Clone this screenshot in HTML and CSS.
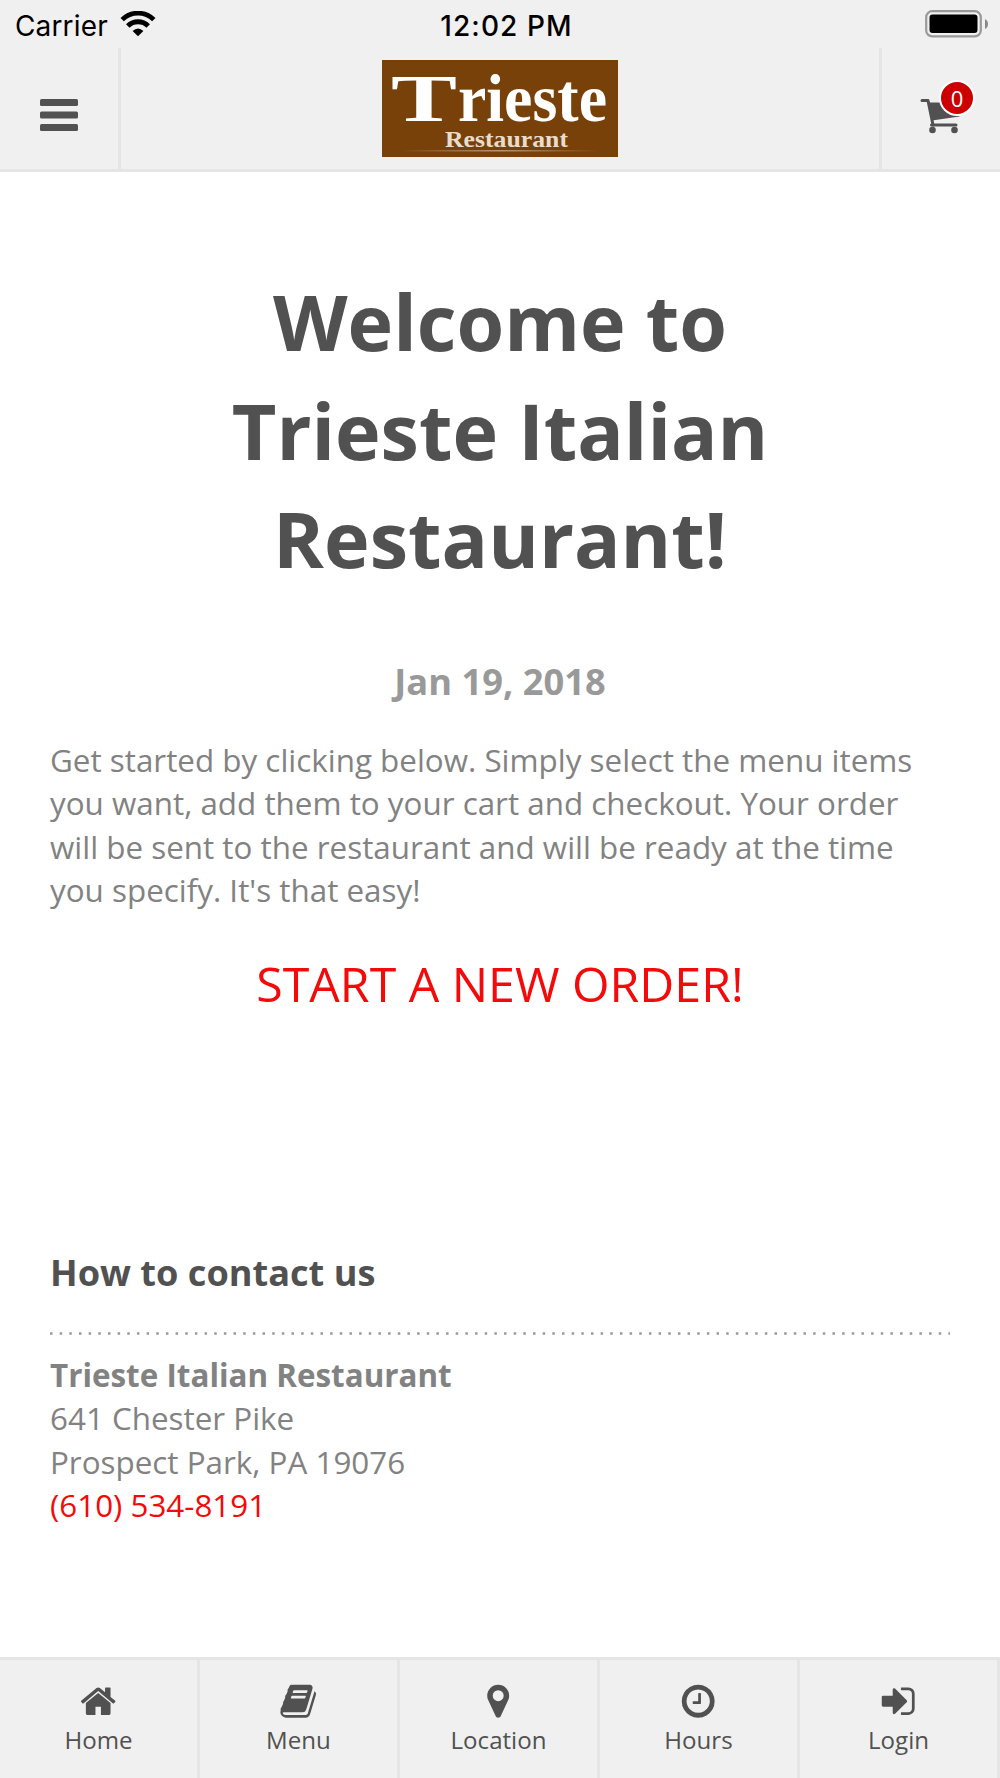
FILE: index.html
```html
<!DOCTYPE html>
<html lang="en">
<head>
<meta charset="utf-8">
<title>Trieste Italian Restaurant</title>
<link rel="stylesheet" href="styles.css">
</head>
<body>
<div class="app">
  <div class="status">
    <div class="carrier"><span class="carrier-name">Carrier</span>
      <svg class="wifi" width="36" height="26" viewBox="0 0 36 26">
        <g fill="none" stroke="#000">
          <path d="M2.2 8.600A22.6 22.6 0 0 1 33.8 8.600" stroke-width="4.8"/>
          <path d="M7.8 15A14.6 14.6 0 0 1 28.2 15" stroke-width="5"/>
        </g>
        <path d="M12.600 20Q18 15 23.400 20L18 25.200Z"/>
      </svg>
    </div>
    <div class="clock">12:02 PM</div>
    <svg class="battery" width="64" height="28" viewBox="0 0 64 28">
      <rect x="1.2" y="1.2" width="54.6" height="25.2" rx="6" fill="none" stroke="#999" stroke-width="2.2"/>
      <rect x="4.5" y="4.6" width="48" height="18.4" rx="3"/>
      <path d="M60 9q3 1.500 3 5t-3 5z" fill="#888"/>
    </svg>
  </div>

  <header class="header">
    <a class="header-btn menu-btn">
      <svg width="38" height="32" viewBox="0 0 38 32" fill="#515151">
        <rect y="0" width="38" height="7" rx="1.600"/>
        <rect y="12.500" width="38" height="7" rx="1.600"/>
        <rect y="25" width="38" height="7" rx="1.600"/>
      </svg>
    </a>
    <svg class="logo" width="236" height="97" viewBox="0 0 236 97">
      <defs>
        <linearGradient id="rule"><stop offset="0" stop-color="#fff" stop-opacity="0"/><stop offset=".5" stop-color="#fff" stop-opacity=".45"/><stop offset="1" stop-color="#fff" stop-opacity="0"/></linearGradient>
      </defs>
      <rect width="236" height="97" fill="#784109"/>
      <text class="logo-cap" x="9" y="61" textLength="66" lengthAdjust="spacingAndGlyphs">T</text>
      <text class="logo-name" x="76" y="61" textLength="149" lengthAdjust="spacingAndGlyphs">rieste</text>
      <text class="logo-sub" x="63" y="87" textLength="123" lengthAdjust="spacingAndGlyphs">Restaurant</text>
      <rect x="18" y="90" width="198" height="1.500" fill="url(#rule)"/>
    </svg>
    <a class="header-btn cart-btn">
      <span class="cart">
        <svg width="42" height="36" viewBox="0 0 42 36" fill="#515151">
          <path d="M2 2.500H8L13 27" fill="none" stroke="#515151" stroke-width="3" stroke-linecap="round" stroke-linejoin="round"/>
          <path d="M8 4.500H36L39.500 18.500L12 22.500Z"/>
          <rect x="10" y="25.500" width="27.500" height="3" rx="1.500"/>
          <circle cx="12.500" cy="32" r="3.300"/>
          <circle cx="34.500" cy="32" r="3.300"/>
        </svg>
        <span class="badge">0</span>
      </span>
    </a>
  </header>

  <main class="content">
    <h1>Welcome to<br>Trieste Italian<br>Restaurant!</h1>
    <p class="date">Jan 19, 2018</p>
    <p class="intro">Get started by clicking below. Simply select the menu items<br>you want, add them to your cart and checkout. Your order<br>will be sent to the restaurant and will be ready at the time<br>you specify. It's that easy!</p>
    <a class="start">START A NEW ORDER!</a>
    <h2>How to contact us</h2>
    <svg class="dots" width="900" height="3"><path d="M0 1.500H900" stroke="#999" stroke-width="2.500" stroke-dasharray="2.500 7.160"/></svg>
    <address><b>Trieste Italian Restaurant</b><br>641 Chester Pike<br>Prospect Park, PA 19076<br><a class="phone">(610) 534-8191</a></address>
  </main>

  <nav class="tabs">
    <a class="tab"><svg class="icon" viewBox="0 0 1792 1792"><path d="M1472 992v480q0 26-19 45t-45 19h-384v-384h-256v384h-384q-26 0-45-19t-19-45v-480q0-1 .5-3t.5-3l575-474 575 474q1 2 1 6zm223-69l-62 74q-8 9-21 11h-3q-13 0-21-7l-692-577-692 577q-12 8-24 7-13-2-21-11l-62-74q-8-10-7-23.500t11-21.500l719-599q32-26 76-26t76 26l244 204v-195q0-14 9-23t23-9h192q14 0 23 9t9 23v408l219 182q10 8 11 21.500t-7 23.500z"/></svg><span>Home</span></a>
    <a class="tab"><svg class="icon" viewBox="0 0 1792 1792"><path d="M1703 478q40 57 18 129l-275 906q-19 64-76.500 107.500t-122.500 43.500h-923q-77 0-148.500-53.500t-99.500-131.500q-24-67-2-127 0-4 3-27t4-37q1-8-3-21.500t-3-19.500q2-11 8-21t16.500-23.500 16.500-23.500q23-38 45-91.500t30-91.500q3-10 .5-30t-.5-28q3-11 17-28t17-23q21-36 42-92t25-90q1-9-2.500-32t.5-28q4-13 22-30.500t22-22.500q19-26 42.500-84.500t27.500-96.500q1-8-3-25.500t-2-26.500q2-8 9-18t18-23 17-21q8-12 16.500-30.500t15-35 16-36 19.500-32 26.500-23.500 36-11.500 47.500 5.500l-1 3q38-9 51-9h761q74 0 114 56t18 130l-274 906q-36 119-71.500 153.500t-128.500 34.500h-869q-27 0-38 15-11 16-1 43 24 70 144 70h923q29 0 56-15.500t35-41.500l300-987q7-22 5-57 38 15 59 43zm-1064 2q-4 13 2 22.500t20 9.500h608q13 0 25.500-9.500t16.500-22.500l21-64q4-13-2-22.500t-20-9.500h-608q-13 0-25.500 9.500t-16.500 22.500zm-83 256q-4 13 2 22.500t20 9.500h608q13 0 25.500-9.500t16.500-22.500l21-64q4-13-2-22.500t-20-9.500h-608q-13 0-25.500 9.500t-16.500 22.500z"/></svg><span>Menu</span></a>
    <a class="tab"><svg class="icon" viewBox="0 0 1792 1792"><path d="M1152 640q0-106-75-181t-181-75-181 75-75 181 75 181 181 75 181-75 75-181zm256 0q0 109-33 179l-364 774q-16 33-47.500 52t-67.500 19-67.500-19-46.500-52l-365-774q-33-70-33-179 0-212 150-362t362-150 362 150 150 362z"/></svg><span>Location</span></a>
    <a class="tab"><svg class="icon" viewBox="0 0 1792 1792"><path d="M1024 544v448q0 14-9 23t-23 9h-320q-14 0-23-9t-9-23v-64q0-14 9-23t23-9h224v-352q0-14 9-23t23-9h64q14 0 23 9t9 23zm416 352q0-148-73-273t-198-198-273-73-273 73-198 198-73 273 73 273 198 198 273 73 273-73 198-198 73-273zm224 0q0 209-103 385.500t-279.500 279.500-385.500 103-385.500-103-279.500-279.500-103-385.500 103-385.500 279.500-279.500 385.500-103 385.500 103 279.500 279.500 103 385.500z"/></svg><span>Hours</span></a>
    <a class="tab"><svg class="icon" viewBox="0 0 1792 1792"><path d="M1312 896q0 26-19 45l-544 544q-19 19-45 19t-45-19-19-45v-288h-448q-26 0-45-19t-19-45v-384q0-26 19-45t45-19h448v-288q0-26 19-45t45-19 45 19l544 544q19 19 19 45zm352-352v704q0 119-84.500 203.500t-203.500 84.500h-320q-13 0-22.500-9.500t-9.500-22.500q0-4-1-20t-.5-26.500 3-23.500 10-19.500 20.500-6.500h320q66 0 113-47t47-113v-704q0-66-47-113t-113-47h-312l-11.500-1-11.500-3-8-5.500-7-9-2-13.500q0-4-1-20t-.5-26.500 3-23.500 10-19.500 20.500-6.500h320q119 0 203.500 84.500t84.500 203.500z"/></svg><span>Login</span></a>
  </nav>
</div>
</body>
</html>
```
FILE: styles.css
```css
* { box-sizing: border-box; }
body { margin: 0; background: #fff; font-family: "Open Sans", sans-serif; color: #828282; }
h1, h2, p { margin: 0; }
svg { display: block; }
.app { width: 1000px; height: 1778px; display: flex; flex-direction: column; overflow: hidden; }

.status { height: 48px; background: #f0f0f0; display: grid; grid-template-columns: 1fr auto 1fr; align-items: start; padding: 0 11px 0 15px; color: #000; font-family: Inter, sans-serif; font-size: 28px; line-height: 34px; }
.carrier { display: flex; gap: 12px; padding-top: 9px; }
.carrier-name { letter-spacing: 0.150px; }
.wifi { margin-top: 2px; }
.clock { padding: 9px 0 0 9px; font-weight: 500; letter-spacing: 1.100px; }
.battery { justify-self: end; margin-top: 10px; }

.header { height: 124px; background: #f0f0f0; border-bottom: 3px solid #e5e5e5; display: flex; justify-content: space-between; align-items: stretch; }
.header-btn { width: 121px; display: flex; }
.menu-btn { border-right: 3px solid #e5e5e5; padding: 51px 0 0 40px; }
.cart-btn { border-left: 3px solid #e5e5e5; padding: 50px 0 0 38px; }
.logo { margin-top: 12px; }
.logo text { fill: #fff; font-family: "Liberation Serif", serif; font-weight: 700; }
.logo .logo-cap { font-size: 67px; }
.logo .logo-name { font-size: 67px; }
.logo .logo-sub { font-size: 23px; fill: #e8dccf; }
.cart { position: relative; width: 42px; height: 36px; }
.badge { position: absolute; left: 19px; top: -18px; width: 36px; height: 36px; border: 2px solid #fff; border-radius: 50%; background: #c00; color: #fff; font-size: 22px; line-height: 32px; text-align: center; }

.content { flex: 1; padding: 95px 50px 0; display: flex; flex-direction: column; }
h1 { font-size: 77.200px; line-height: 108.700px; font-weight: 700; color: #515151; text-align: center; }
.date { margin-top: 62px; font-size: 36.250px; line-height: 52px; font-weight: 700; color: #999; text-align: center; }
.intro { margin-top: 30.500px; font-size: 31.380px; line-height: 43.600px; white-space: nowrap; }
.start { margin-top: 37px; font-size: 48.250px; line-height: 68px; color: #f30a0a; text-align: center; }
h2 { margin-top: 229px; font-size: 36.150px; line-height: 52px; font-weight: 700; color: #515151; }
.dots { margin-top: 34px; flex: none; }
address { margin-top: 18px; font-size: 31.380px; line-height: 43.500px; font-style: normal; }
.phone { color: #f30a0a; }

.tabs { height: 121px; background: #f0f0f0; border-top: 3px solid #e5e5e5; display: grid; grid-template-columns: 200px repeat(4, 200px); }
.tab { display: flex; flex-direction: column; align-items: center; padding-top: 22px; border-right: 3px solid #e5e5e5; font-size: 24.100px; line-height: 39px; color: #515151; }
.icon { width: 38.400px; height: 38.400px; fill: #515151; }
```
